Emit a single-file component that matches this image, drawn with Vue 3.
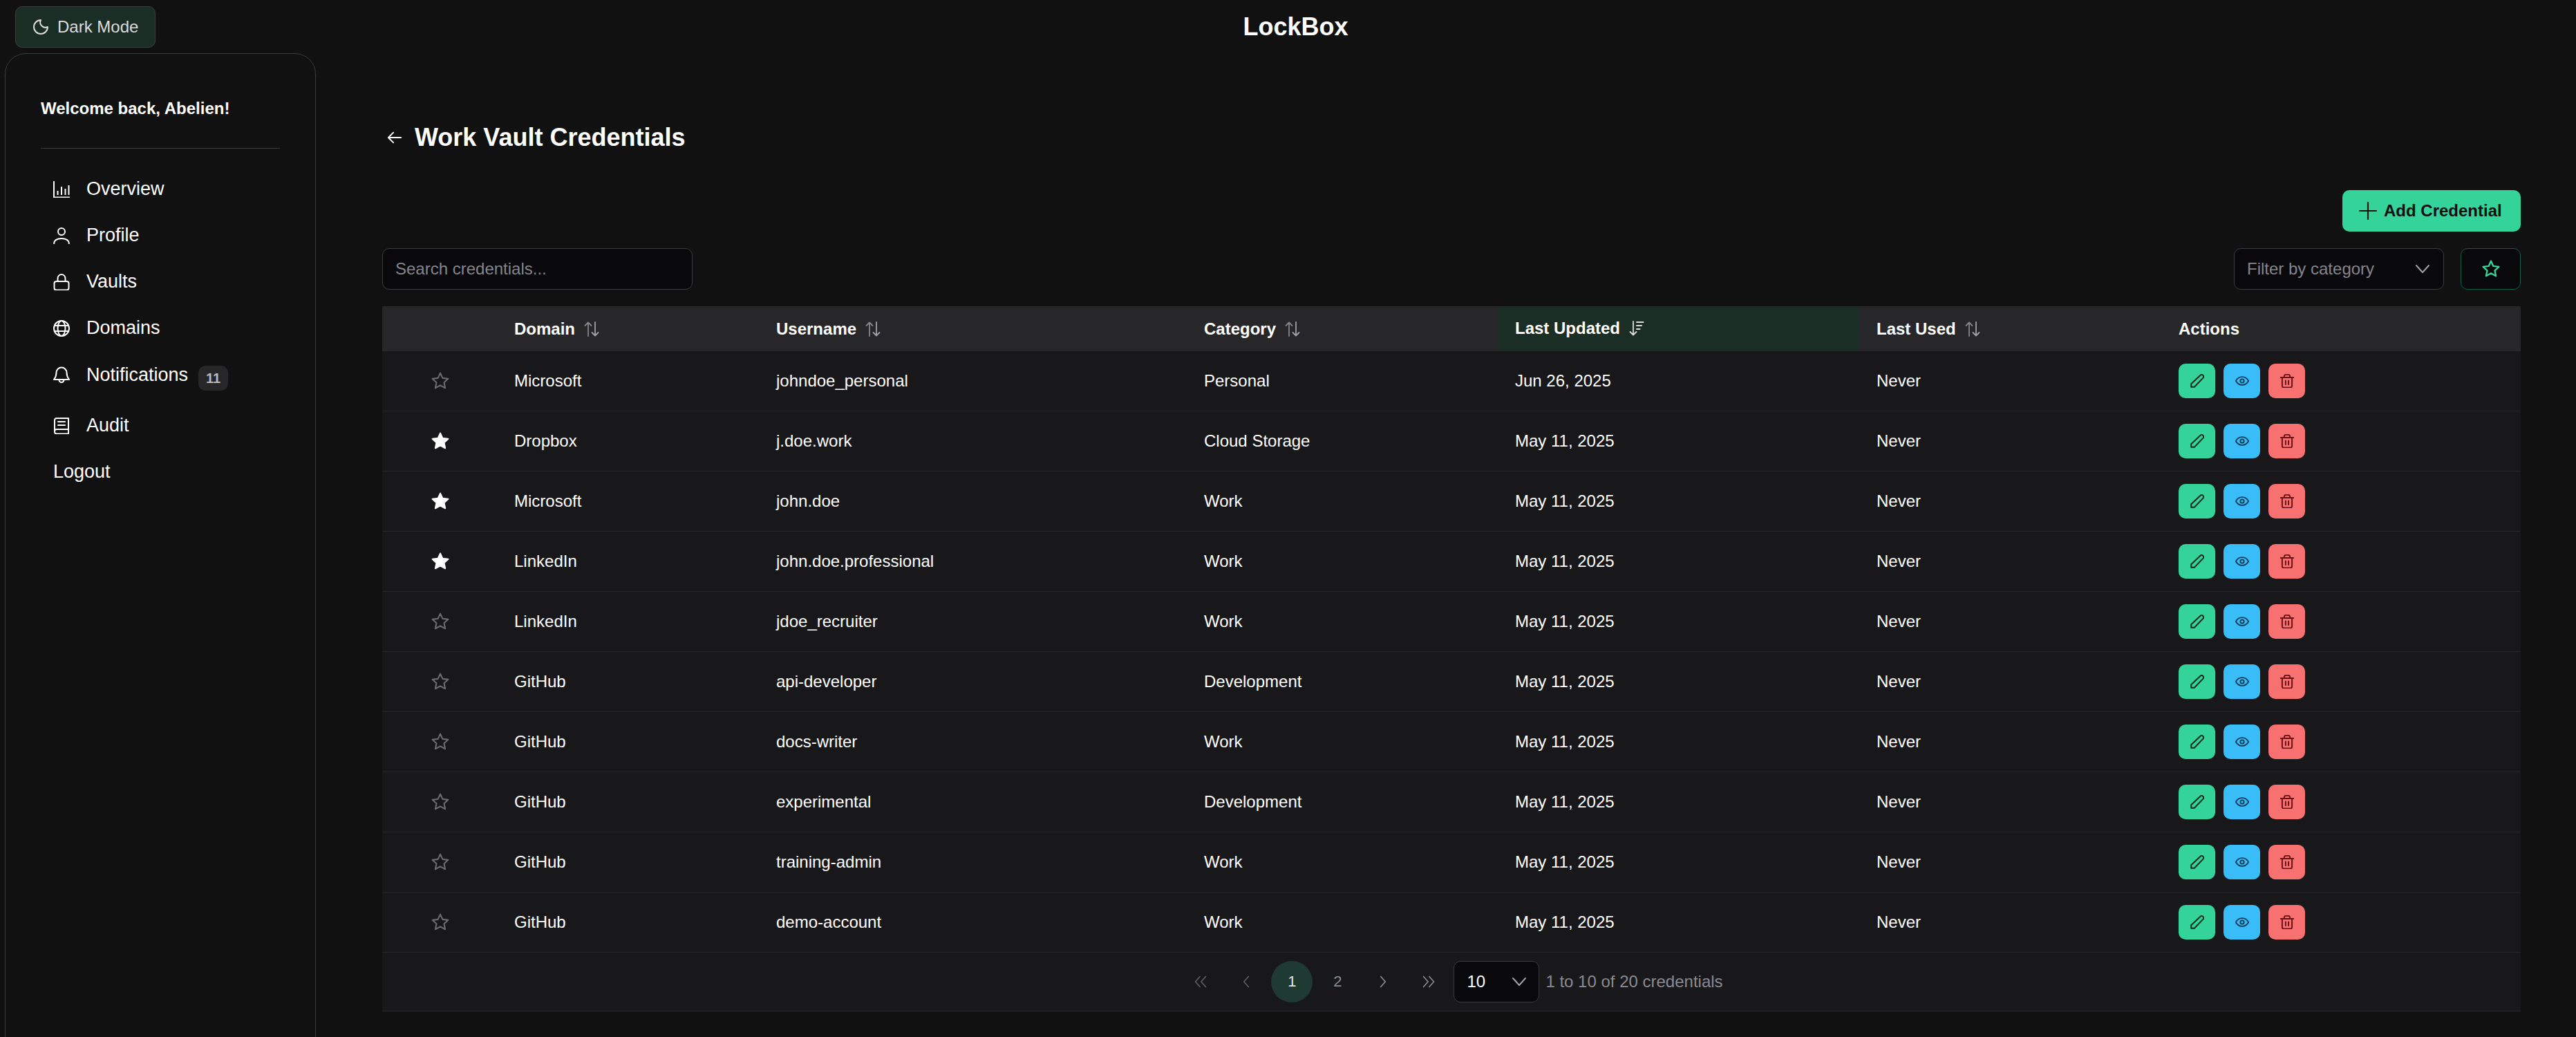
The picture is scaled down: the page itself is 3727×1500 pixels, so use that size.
<script setup>
const nav = [
  { label: 'Overview', icon: 'chart' },
  { label: 'Profile', icon: 'user' },
  { label: 'Vaults', icon: 'lock' },
  { label: 'Domains', icon: 'globe' },
  { label: 'Notifications', icon: 'bell', badge: 11 },
  { label: 'Audit', icon: 'book' },
]

const columns = [
  { label: '', cls: 'c-star' },
  { label: 'Domain', cls: 'c-domain', sort: 'both' },
  { label: 'Username', cls: 'c-user', sort: 'both' },
  { label: 'Category', cls: 'c-cat', sort: 'both' },
  { label: 'Last Updated', cls: 'c-upd', sort: 'desc' },
  { label: 'Last Used', cls: 'c-used', sort: 'both' },
  { label: 'Actions', cls: 'c-act' },
]

const rows = [
  { fav: false, domain: 'Microsoft', user: 'johndoe_personal', cat: 'Personal', updated: 'Jun 26, 2025' },
  { fav: true, domain: 'Dropbox', user: 'j.doe.work', cat: 'Cloud Storage', updated: 'May 11, 2025' },
  { fav: true, domain: 'Microsoft', user: 'john.doe', cat: 'Work', updated: 'May 11, 2025' },
  { fav: true, domain: 'LinkedIn', user: 'john.doe.professional', cat: 'Work', updated: 'May 11, 2025' },
  { fav: false, domain: 'LinkedIn', user: 'jdoe_recruiter', cat: 'Work', updated: 'May 11, 2025' },
  { fav: false, domain: 'GitHub', user: 'api-developer', cat: 'Development', updated: 'May 11, 2025' },
  { fav: false, domain: 'GitHub', user: 'docs-writer', cat: 'Work', updated: 'May 11, 2025' },
  { fav: false, domain: 'GitHub', user: 'experimental', cat: 'Development', updated: 'May 11, 2025' },
  { fav: false, domain: 'GitHub', user: 'training-admin', cat: 'Work', updated: 'May 11, 2025' },
  { fav: false, domain: 'GitHub', user: 'demo-account', cat: 'Work', updated: 'May 11, 2025' },
]

const starPath = 'M12 2.2l2.9 6.3 6.9.8-5.1 4.7 1.4 6.8-6.1-3.4-6.1 3.4 1.4-6.8-5.1-4.7 6.9-.8z'
</script>

<template>
  <div class="app">
    <header class="topbar">
      <div class="topbar-left">
        <button class="theme-btn">
          <svg class="ico24" viewBox="0 0 24 24" fill="none" stroke="currentColor" stroke-width="2" stroke-linecap="round" stroke-linejoin="round">
            <path d="M12 2a7.5 7.5 0 0 0 10 10 10 10 0 1 1-10-10Z" />
          </svg>
          Dark Mode
        </button>
      </div>
      <div class="brand">LockBox</div>
      <div></div>
    </header>

    <div class="body">
      <aside class="sidebar">
        <div class="welcome">Welcome back, Abelien!</div>
        <nav class="nav">
          <a v-for="item in nav" :key="item.label" class="nav-item" :class="{ 'has-badge': item.badge }">
            <svg class="ico24" viewBox="0 0 24 24" fill="none" stroke="currentColor" stroke-width="2" stroke-linecap="round" stroke-linejoin="round">
              <template v-if="item.icon === 'chart'">
                <path d="M1 0v23.500h23" stroke-linecap="butt" />
                <path d="M6.500 20v-6M12 20V8M17.500 20v-9M22.500 20V6" stroke-linecap="butt" />
              </template>
              <template v-else-if="item.icon === 'user'">
                <circle cx="12" cy="6" r="5" />
                <path d="M1.200 23.500c0-4.800 4.300-7.500 10.800-7.500s10.800 2.700 10.800 7.500" />
              </template>
              <template v-else-if="item.icon === 'lock'">
                <rect x="1.500" y="11" width="21" height="12.500" rx="3" />
                <path d="M6.500 11V6.500a5.500 5.500 0 0 1 11 0V11" />
              </template>
              <template v-else-if="item.icon === 'globe'">
                <circle cx="12" cy="12" r="11" />
                <ellipse cx="12" cy="12" rx="5.500" ry="11" />
                <path d="M2 8h20M2 16h20" />
              </template>
              <template v-else-if="item.icon === 'bell'">
                <path d="M12 1.500a7.500 7.500 0 0 0-7.500 7.500c0 6-2.500 8.500-3.500 10h22c-1-1.500-3.500-4-3.500-10A7.500 7.500 0 0 0 12 1.500z" />
                <path d="M8.500 19.500a3.500 3.500 0 0 0 7 0" />
              </template>
              <template v-else>
                <path d="M2 4a3 3 0 0 1 3-3h17v22.500H5a3 3 0 0 1-3-3z" />
                <path d="M2 20a3 3 0 0 1 3-3h17" />
                <path d="M7 6h10M7 11h10" />
              </template>
            </svg>
            <span>{{ item.label }}</span>
            <span v-if="item.badge" class="badge">{{ item.badge }}</span>
          </a>
          <a class="nav-item">Logout</a>
        </nav>
      </aside>

      <main class="main">
        <div class="title-row">
          <svg class="back" viewBox="0 0 24 24" fill="none" stroke="currentColor" stroke-width="2" stroke-linecap="round" stroke-linejoin="round">
            <path d="M22 12H2M10 4l-8 8 8 8" />
          </svg>
          <h1>Work Vault Credentials</h1>
        </div>

        <div class="add-row">
          <button class="add-btn">
            <svg class="ico26" viewBox="0 0 24 24" fill="none" stroke="currentColor" stroke-width="2" stroke-linecap="round">
              <path d="M12 1v22M1 12h22" />
            </svg>
            Add Credential
          </button>
        </div>

        <div class="filter-row">
          <input class="search" placeholder="Search credentials..." />
          <div class="filter-right">
            <div class="select filter">
              <span>Filter by category</span>
              <svg class="chev" viewBox="0 0 24 24" fill="none" stroke="currentColor" stroke-width="2" stroke-linecap="round" stroke-linejoin="round">
                <path d="M3 7l9 10 9-10" />
              </svg>
            </div>
            <button class="fav-btn">
              <svg class="star" viewBox="0 0 24 24" fill="none" stroke="currentColor" stroke-width="2" stroke-linejoin="round">
                <path :d="starPath" />
              </svg>
            </button>
          </div>
        </div>

        <section class="table-card">
          <table>
            <thead>
              <tr>
                <th v-for="col in columns" :key="col.cls" :class="[col.cls, { active: col.sort === 'desc' }]">
                  <span class="th-in">
                    {{ col.label }}
                    <svg v-if="col.sort === 'both'" class="sort" viewBox="0 0 22 22" fill="none" stroke="currentColor" stroke-width="1.800" stroke-linecap="round" stroke-linejoin="round">
                      <path d="M6 21V1.500M1.500 6L6 1.500 10.500 6" />
                      <path class="sort-down" d="M16 1v19.500M11.500 16l4.500 4.500 4.500-4.500" />
                    </svg>
                    <svg v-else-if="col.sort === 'desc'" class="sort sort-active" viewBox="0 0 22 22" fill="none" stroke="currentColor" stroke-width="1.800" stroke-linecap="round" stroke-linejoin="round">
                      <path d="M6 1v19.500M1.500 16L6 20.500 10.500 16" />
                      <path d="M11 2h9.500M11 7h7M11 12h4.500" stroke-width="2" />
                    </svg>
                  </span>
                </th>
              </tr>
            </thead>
            <tbody>
              <tr v-for="(row, i) in rows" :key="i">
                <td class="star-cell">
                  <svg class="star" :class="row.fav ? 'star-on' : 'star-off'" viewBox="0 0 24 24" stroke-width="1.800" stroke-linejoin="round">
                    <path :d="starPath" />
                  </svg>
                </td>
                <td>{{ row.domain }}</td>
                <td>{{ row.user }}</td>
                <td>{{ row.cat }}</td>
                <td>{{ row.updated }}</td>
                <td>Never</td>
                <td>
                  <div class="actions">
                    <button class="act green">
                      <svg class="act-ico" viewBox="0 0 24 24" fill="none" stroke="currentColor" stroke-width="2.400" stroke-linejoin="round">
                        <path d="M1.500 22.500v-5.500L17.500 2a3 3 0 0 1 4.200 0l.5.500a3 3 0 0 1 0 4.200L7 22.500z" />
                      </svg>
                    </button>
                    <button class="act blue">
                      <svg class="act-ico" viewBox="0 0 24 24" fill="none" stroke="currentColor" stroke-width="2.200" stroke-linejoin="round">
                        <path d="M1 12c2.500-4.500 6.500-7 11-7s8.500 2.500 11 7c-2.500 4.500-6.500 7-11 7S3.500 16.500 1 12z" />
                        <circle cx="12" cy="12" r="3.200" />
                      </svg>
                    </button>
                    <button class="act red">
                      <svg class="act-ico" viewBox="0 0 24 24" fill="none" stroke="currentColor" stroke-width="2.400" stroke-linecap="round" stroke-linejoin="round">
                        <path d="M1 6h22M7 6V4a3 3 0 0 1 3-3h4a3 3 0 0 1 3 3v2M3.500 6v14.500a3 3 0 0 0 3 3h11a3 3 0 0 0 3-3V6M9.500 11.500v6.500M14.500 11.500v6.500" />
                      </svg>
                    </button>
                  </div>
                </td>
              </tr>
            </tbody>
          </table>

          <div class="pager">
            <button class="page dim">
              <svg class="pg-ico" viewBox="0 0 24 24" fill="none" stroke="currentColor" stroke-width="2" stroke-linecap="round" stroke-linejoin="round"><path d="M11 3l-8 9 8 9M21 3l-8 9 8 9" /></svg>
            </button>
            <button class="page dim">
              <svg class="pg-ico" viewBox="0 0 24 24" fill="none" stroke="currentColor" stroke-width="2" stroke-linecap="round" stroke-linejoin="round"><path d="M16 3l-8 9 8 9" /></svg>
            </button>
            <button class="page current">1</button>
            <button class="page">2</button>
            <button class="page">
              <svg class="pg-ico" viewBox="0 0 24 24" fill="none" stroke="currentColor" stroke-width="2" stroke-linecap="round" stroke-linejoin="round"><path d="M8 3l8 9-8 9" /></svg>
            </button>
            <button class="page">
              <svg class="pg-ico" viewBox="0 0 24 24" fill="none" stroke="currentColor" stroke-width="2" stroke-linecap="round" stroke-linejoin="round"><path d="M3 3l8 9-8 9M13 3l8 9-8 9" /></svg>
            </button>
            <div class="select per-page">
              <span>10</span>
              <svg class="chev" viewBox="0 0 24 24" fill="none" stroke="currentColor" stroke-width="2" stroke-linecap="round" stroke-linejoin="round">
                <path d="M3 7l9 10 9-10" />
              </svg>
            </div>
            <span class="count">1 to 10 of 20 credentials</span>
          </div>
        </section>
      </main>
    </div>
  </div>
</template>

<style>
html,
body {
  margin: 0;
  background: #111112;
}
</style>

<style scoped>
.app {
  height: 1500px;
  overflow: hidden;
  background: #111112;
  color: #fff;
  font-family: 'Liberation Sans', Arial, sans-serif;
  font-size: 24px;
}

button {
  font-family: inherit;
  cursor: pointer;
  white-space: nowrap;
}

.topbar {
  height: 77px;
  display: grid;
  grid-template-columns: 1fr auto 1fr;
  box-sizing: border-box;
  padding: 9px 0 0 22px;
}

.brand {
  font-size: 36px;
  font-weight: 700;
  line-height: 58px;
  margin-top: 1px;
}

.theme-btn {
  display: flex;
  align-items: center;
  gap: 12px;
  box-sizing: border-box;
  width: 203px;
  height: 60px;
  padding: 0 0 0 24px;
  border: 1px solid #3a3f3e;
  border-radius: 10px;
  background: #1a2e26;
  color: #dcdcdc;
  font-size: 24px;
}

.ico24 {
  width: 24px;
  height: 24px;
  flex: none;
}

.body {
  display: flex;
}

.sidebar {
  box-sizing: border-box;
  width: 450px;
  height: 1500px;
  margin-left: 7px;
  padding: 0 51px;
  border: 1px solid #3a3a40;
  border-radius: 30px;
}

.welcome {
  font-weight: 700;
  line-height: 28px;
  padding: 65px 0 43px;
  border-bottom: 1px solid #3a3a40;
}

.nav {
  display: flex;
  flex-direction: column;
  padding: 25px 0 0 18px;
}

.nav-item {
  display: flex;
  align-items: center;
  gap: 24px;
  height: 67px;
  font-size: 27px;
}

.has-badge {
  box-sizing: border-box;
  height: 74px;
  padding-bottom: 6px;
}

.badge {
  display: flex;
  align-items: center;
  justify-content: center;
  width: 43px;
  height: 36px;
  margin: 10px 0 0 -9px;
  border-radius: 10px;
  background: #27272a;
  color: #b9b9be;
  font-size: 20px;
  font-weight: 700;
}

.main {
  width: 3094px;
  margin-left: 96px;
}

.title-row {
  display: flex;
  align-items: center;
  gap: 18px;
  height: 44px;
  margin: 100px 0 0 7px;
}

.back {
  width: 22px;
  height: 22px;
}

h1 {
  margin: 0;
  font-size: 36px;
  font-weight: 700;
  line-height: 44px;
}

.add-row {
  display: flex;
  justify-content: flex-end;
  margin-top: 54px;
}

.add-btn {
  display: flex;
  align-items: center;
  gap: 10px;
  box-sizing: border-box;
  width: 258px;
  height: 60px;
  padding: 0 0 0 24px;
  border: 0;
  border-radius: 10px;
  background: #34d399;
  color: #111;
  font-size: 24px;
  font-weight: 700;
}

.ico26 {
  width: 26px;
  height: 26px;
}

.filter-row {
  display: flex;
  justify-content: space-between;
  margin-top: 24px;
}

.search {
  box-sizing: border-box;
  width: 449px;
  height: 60px;
  padding: 0 18px;
  border: 1px solid #3a3a40;
  border-radius: 10px;
  outline: none;
  background: #09090b;
  color: #fff;
  font-family: inherit;
  font-size: 24px;
}

.search::placeholder {
  color: #85858d;
  opacity: 1;
}

.filter-right {
  display: flex;
  gap: 24px;
}

.select {
  display: flex;
  align-items: center;
  justify-content: space-between;
  box-sizing: border-box;
  height: 60px;
  border: 1px solid #3a3a40;
  border-radius: 10px;
  background: #09090b;
}

.filter {
  width: 304px;
  padding: 0 18px;
  color: #85858d;
}

.chev {
  width: 24px;
  height: 24px;
  color: #a1a1aa;
}

.fav-btn {
  display: flex;
  align-items: center;
  justify-content: center;
  width: 87px;
  height: 60px;
  padding: 0;
  border: 1px solid #0f5f48;
  border-radius: 10px;
  background: #09090b;
  color: #34d399;
}

.star {
  display: block;
  width: 28px;
  height: 28px;
}

.table-card {
  margin-top: 24px;
  background: #18181b;
  border-bottom: 1px solid #27272a;
}

table {
  width: 100%;
  border-collapse: separate;
  border-spacing: 0;
  table-layout: fixed;
}

th {
  box-sizing: border-box;
  height: 65px;
  padding: 0 23px 0 25px;
  background: #27272a;
  font-weight: 700;
  text-align: left;
}

th.active {
  background: #1a2e26;
  border-bottom: 1px solid #27272a;
}

.th-in {
  display: flex;
  align-items: center;
  gap: 13px;
}

.c-star { width: 166px; }
.c-domain { width: 379px; }
.c-user { width: 619px; }
.c-cat { width: 450px; }
.c-upd { width: 523px; }
.c-used { width: 437px; }

.sort {
  width: 22px;
  height: 22px;
  color: #85858d;
}

.sort-down {
  color: #a1a1aa;
}

.sort-active {
  color: #dcdcdc;
}

td {
  box-sizing: border-box;
  height: 87px;
  padding: 0 23px 0 25px;
  border-bottom: 1px solid #27272a;
}

.star-cell .star {
  margin: 0 auto;
}

.star-on {
  fill: #fff;
  stroke: #fff;
}

.star-off {
  fill: none;
  stroke: #6a6a70;
}

.actions {
  display: flex;
  gap: 12px;
}

.act {
  display: flex;
  align-items: center;
  justify-content: center;
  width: 53px;
  height: 50px;
  padding: 0;
  border: 0;
  border-radius: 10px;
}

.act-ico {
  width: 20px;
  height: 20px;
}

.green {
  background: #34d399;
  color: #0b2a20;
}

.blue {
  background: #38bdf8;
  color: #0c3b58;
}

.red {
  background: #f87171;
  color: #6b1216;
}

.pager {
  display: flex;
  align-items: center;
  justify-content: center;
  gap: 6px;
  height: 84px;
}

.page {
  display: flex;
  align-items: center;
  justify-content: center;
  width: 60px;
  height: 60px;
  padding: 0;
  border: 0;
  border-radius: 50%;
  background: none;
  color: #8a8a92;
  font-size: 22px;
}

.dim {
  color: #5e5e64;
}

.current {
  background: #1f3a32;
  color: #e4e4e4;
}

.pg-ico {
  width: 20px;
  height: 20px;
}

.per-page {
  width: 124px;
  padding: 0 16px 0 18px;
}

.count {
  margin-left: 3px;
  color: #8a8a92;
}
</style>
